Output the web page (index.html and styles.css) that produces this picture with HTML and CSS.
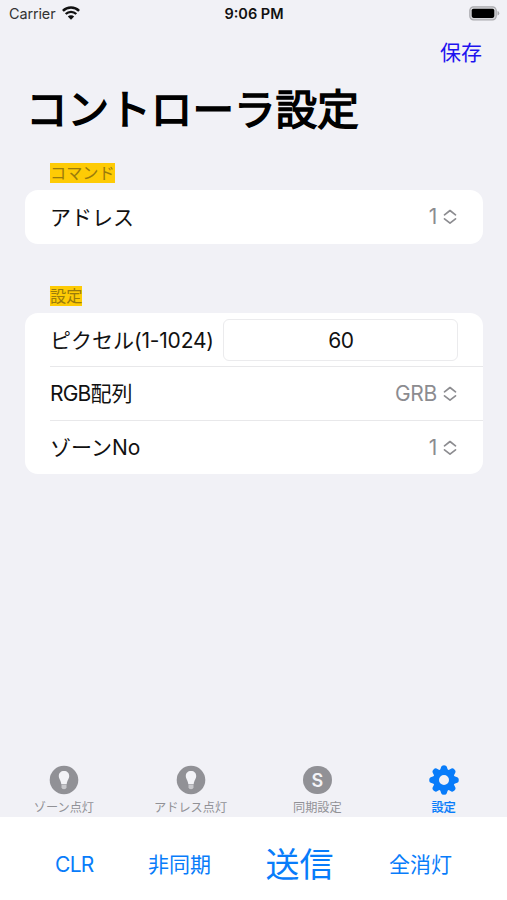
FILE: index.html
```html
<!DOCTYPE html>
<html lang="ja">
<head>
<meta charset="utf-8">
<title>コントローラ設定</title>
<link rel="stylesheet" href="styles.css">
</head>
<body>
<svg class="defs" width="0" height="0">
  <symbol id="updown" viewBox="0 0 14 16"><path d="M1.500 5.800 7 1.500l5.500 4.300M1.500 9.800 7 14.100l5.500-4.300" fill="none" stroke="currentColor" stroke-width="1.700" stroke-linecap="round" stroke-linejoin="round"/></symbol>
  <symbol id="bulb" viewBox="0 0 30 30"><circle cx="15" cy="15" r="14.300" fill="#919196"/><path d="M15 6c-3.200 0-5.200 2.100-5.200 4.900 0 2.900 2.100 4.100 2.500 8.300h5.400c.4-4.200 2.500-5.400 2.500-8.300 0-2.800-2-4.900-5.200-4.900Z" fill="#f3f3f7"/><path d="M12.500 19.700h5v2.700q-.2 1.800-2.500 1.800t-2.500-1.800Z" fill="#c8c8cc"/></symbol>
</svg>
<header class="status">
  <div class="carrier"><span>Carrier</span>
    <svg class="wifi" viewBox="0 0 18 14"><g fill="none" stroke="#111"><path d="M.9 4.900a11.500 11.500 0 0 1 16.200 0" stroke-width="2.500"/><path d="M3.700 8a7.500 7.500 0 0 1 10.600 0" stroke-width="2.300"/></g><path d="M5.800 10.500a4.500 4.500 0 0 1 6.400 0L9 13.700Z" fill="#111"/></svg>
  </div>
  <time>9:06 PM</time>
  <svg class="battery" viewBox="0 0 31 15"><rect x=".8" y=".8" width="26.400" height="13" rx="3.700" fill="#d6d6da" stroke="#aaaaae" stroke-width="1.200"/><rect x="2.700" y="2.700" width="22.600" height="9.200" rx="1.800" fill="#000"/><path d="M28.500 5v4.600q1.800-.6 1.800-2.300T28.500 5Z" fill="#aaaaae"/></svg>
</header>
<nav class="navbar"><a class="save">保存</a></nav>
<main>
  <h1>コントローラ設定</h1>
  <h2><mark>コマンド</mark></h2>
  <section class="card">
    <div class="row"><span>アドレス</span><span class="value">1<svg><use href="#updown"/></svg></span></div>
  </section>
  <h2 class="second"><mark>設定</mark></h2>
  <section class="card">
    <div class="row"><span>ピクセル<span class="range">(1-1024)</span></span><div class="field">60</div></div>
    <div class="row"><span><span class="rgb">RGB</span>配列</span><span class="value">GRB<svg><use href="#updown"/></svg></span></div>
    <div class="row last"><span>ゾーンNo</span><span class="value">1<svg><use href="#updown"/></svg></span></div>
  </section>
</main>
<nav class="tabs">
  <a><svg><use href="#bulb"/></svg><span>ゾーン点灯</span></a>
  <a><svg><use href="#bulb"/></svg><span>アドレス点灯</span></a>
  <a><i class="disc">S</i><span>同期設定</span></a>
  <a class="active"><svg viewBox="-15 -15 30 30"><circle r="8" fill="none" stroke="currentColor" stroke-width="6"/><g fill="currentColor"><path id="cog" d="M-4.200-9 -2.800-13.300Q-2.400-14.800 0-14.800T2.800-13.300L4.200-9Z"/><use href="#cog" transform="rotate(45)"/><use href="#cog" transform="rotate(90)"/><use href="#cog" transform="rotate(135)"/><use href="#cog" transform="rotate(180)"/><use href="#cog" transform="rotate(225)"/><use href="#cog" transform="rotate(270)"/><use href="#cog" transform="rotate(315)"/></g></svg><span>設定</span></a>
</nav>
<footer class="actions">
  <a class="clr">CLR</a><a class="async">非同期</a><a class="send">送信</a><a class="off">全消灯</a>
</footer>
</body>
</html>
```
FILE: styles.css
```css
* { box-sizing: border-box; }
body {
  margin: 0;
  width: 507px;
  height: 900px;
  overflow: hidden;
  display: flex;
  flex-direction: column;
  background: #f1f1f6;
  color: #111;
  font-family: Inter, "Noto Sans CJK JP", sans-serif;
}
.defs { position: absolute; }
.status {
  height: 28px;
  padding: 0 7px 0 9px;
  display: grid;
  grid-template-columns: 1fr auto 1fr;
  align-items: center;
  font-size: 14.400px;
  line-height: 28px;
}
.status time { font-weight: 600; font-size: 14.500px; margin-left: -1px; }
.carrier { display: flex; align-items: center; gap: 7px; color: #333; }
.carrier span { letter-spacing: -.1px; }
.wifi { width: 18px; height: 14px; margin-top: -2px; }
.battery { width: 31px; height: 15px; justify-self: end; margin-top: -2px; }
.navbar { height: 53px; display: flex; justify-content: flex-end; padding: 10px 25px 0; }
.save { color: #1d12ef; font-size: 21px; line-height: 30px; }
main { flex: 1; padding: 0 24px 0 25px; }
h1 {
  margin: 0;
  height: 79px;
  padding: 1px 0 0 1px;
  font-size: 41.600px;
  line-height: 56px;
  font-weight: 400;
  -webkit-text-stroke: 1.500px #000;
  color: #000;
  white-space: nowrap;
}
h2 { margin: 0; height: 30px; padding: 3px 0 0 25px; font-size: 16.200px; line-height: 21px; font-weight: 400; }
h2.second { height: 32px; margin-top: 37px; padding-top: 5px; }
mark { display: block; width: fit-content; height: 20px; background: #fecb05; color: #9a7b0c; }
.card { background: #fff; border-radius: 13px; padding-left: 25px; }
.row {
  height: 53.700px;
  display: flex;
  align-items: center;
  justify-content: space-between;
  padding: 2px 25px 0 0;
  font-size: 21px;
  line-height: 30px;
}
.row + .row { border-top: 1px solid #e8e8ea; padding-top: 1px; }
.row.last { padding-top: 2px; }
.range { letter-spacing: -.2px; }
.rgb { letter-spacing: -.8px; }
.value { display: flex; align-items: center; gap: 6px; color: #8c8c90; letter-spacing: -.3px; padding-right: 1px; }
.value:not(:empty) { margin-top: -1px; }
.value svg { width: 14px; height: 16px; }
.field {
  width: 235px;
  height: 42px;
  margin: -2px 0 0;
  border: 1px solid #ebebed;
  border-radius: 6px;
  padding-left: 1px;
  text-align: center;
  line-height: 42px;
  letter-spacing: -.4px;
}
.tabs { height: 53px; display: grid; grid-template-columns: repeat(4, 1fr); color: #919196; }
.tabs a { display: flex; flex-direction: column; align-items: center; font-size: 12.200px; line-height: 18px; padding: 0 0 0 1px; }
.tabs svg { width: 30px; height: 30px; margin: 1px 0 4px; }
.tabs .active { color: #087cfa; font-weight: 500; padding-left: 0; }
.tabs .active span { -webkit-text-stroke: .2px currentColor; }
.disc {
  width: 28.600px;
  height: 28.600px;
  margin: 1.700px 0 4.700px;
  border-radius: 50%;
  background: #919196;
  color: #f3f3f7;
  font-size: 18px;
  line-height: 29px;
  font-style: normal;
  font-weight: 600;
  text-align: center;
}
.actions {
  height: 83px;
  background: #fff;
  color: #087cfa;
  display: flex;
  align-items: center;
  padding: 12px 55px 0;
  justify-content: space-between;
  font-size: 21px;
  line-height: 40px;
}
.clr { letter-spacing: -.7px; }
.async { margin-left: -1px; }
.send { font-size: 34px; margin-left: -1px; }
```
